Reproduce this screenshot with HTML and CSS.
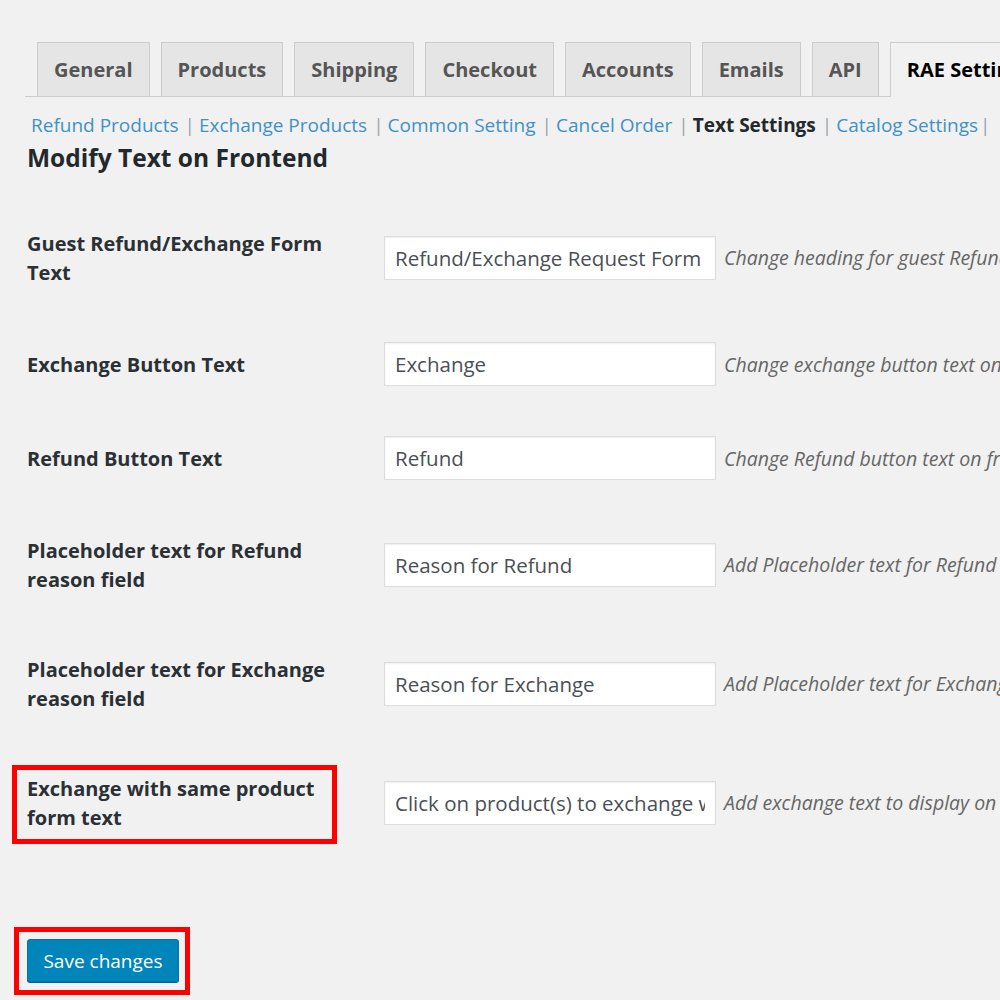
FILE: index.html
```html
<!DOCTYPE html>
<html>
<head>
<meta charset="utf-8">
<link rel="stylesheet" href="styles.css">
</head>
<body>
<div class="wrap">
  <nav class="tabs">
    <span class="tab">General</span>
    <span class="tab">Products</span>
    <span class="tab">Shipping</span>
    <span class="tab">Checkout</span>
    <span class="tab">Accounts</span>
    <span class="tab">Emails</span>
    <span class="tab">API</span>
    <span class="tab active">RAE Settings</span>
  </nav>
  <div class="sublinks">
    <a class="sub">Refund Products</a><span class="sep">|</span><a class="sub">Exchange Products</a><span class="sep">|</span><a class="sub">Common Setting</a><span class="sep">|</span><a class="sub">Cancel Order</a><span class="sep">|</span><b class="sub current">Text Settings</b><span class="sep">|</span><a class="sub">Catalog Settings</a><span class="sep tight">|</span>
  </div>
  <h2 class="heading">Modify Text on Frontend</h2>
  <div class="form">
    <div class="row">
      <div class="label">Guest Refund/Exchange Form Text</div>
      <div class="field"><input class="input" type="text" value="Refund/Exchange Request Form"><span class="desc">Change heading for guest Refund/Exchange form</span></div>
    </div>
    <div class="row">
      <div class="label">Exchange Button Text</div>
      <div class="field"><input class="input" type="text" value="Exchange"><span class="desc">Change exchange button text on frontend</span></div>
    </div>
    <div class="row">
      <div class="label">Refund Button Text</div>
      <div class="field"><input class="input" type="text" value="Refund"><span class="desc">Change Refund button text on frontend</span></div>
    </div>
    <div class="row">
      <div class="label">Placeholder text for Refund reason field</div>
      <div class="field"><input class="input" type="text" value="Reason for Refund"><span class="desc">Add Placeholder text for Refund reason field</span></div>
    </div>
    <div class="row">
      <div class="label">Placeholder text for Exchange reason field</div>
      <div class="field"><input class="input" type="text" value="Reason for Exchange"><span class="desc">Add Placeholder text for Exchange reason field</span></div>
    </div>
    <div class="row">
      <div class="label"><span class="marked marked-label">Exchange with same product form text</span></div>
      <div class="field"><input class="input" type="text" value="Click on product(s) to exchange with same product"><span class="desc">Add exchange text to display on exchange form</span></div>
    </div>
  </div>
  <div class="submit">
    <span class="marked marked-button"><button class="button">Save changes</button></span>
  </div>
</div>
</body>
</html>
```
FILE: styles.css
```css
html, body {
  margin: 0;
  padding: 0;
  overflow: hidden;
  background: #f1f1f1;
}
body {
  font-family: "Open Sans", "Noto Sans", sans-serif;
  color: #23282d;
  width: 1000px;
  height: 1000px;
}
.wrap {
  padding: 42px 0 0 27px;
  width: 1200px;
}
.tabs {
  display: flex;
  gap: 11px;
  margin-left: -2px;
  padding-left: 12px;
  border-bottom: 1px solid #cccccc;
  height: 55px;
  box-sizing: border-box;
}
.tab {
  display: block;
  height: 54px;
  line-height: 54px;
  padding: 0 16px;
  box-sizing: border-box;
  border: 1px solid #cccccc;
  border-bottom: none;
  background: #e5e5e5;
  color: #555555;
  font-size: 20px;
  font-weight: 700;
}
.tab.active {
  background: #f1f1f1;
  color: #000000;
  height: 55px;
  margin-bottom: -1px;
}
.sublinks {
  margin: 15px 0 0 4px;
  font-size: 19px;
  line-height: 26px;
  white-space: nowrap;
}
.sub {
  color: #3f91c7;
}
.sub.current {
  color: #23282d;
  font-weight: 700;
}
.sep {
  color: #9aa4ad;
  margin: 0 4px 0 6px;
}
.sep.tight {
  margin: 0 0 0 2px;
}
.heading {
  margin: 4px 0 0 0;
  font-size: 24.5px;
  line-height: 31px;
  font-weight: 700;
  color: #23282d;
}
.form {
  margin-top: 25px;
}
.row {
  display: flex;
  align-items: center;
}
.label {
  width: 357px;
  box-sizing: border-box;
  padding: 30.5px 18px 30.5px 0;
  font-size: 20px;
  font-weight: 700;
  line-height: 29px;
  color: #2b3035;
}
.field {
  display: flex;
  align-items: center;
  padding: 25px 0;
}
.input {
  width: 332px;
  height: 44px;
  box-sizing: border-box;
  border: 1px solid #dddddd;
  box-shadow: inset 0 1px 2px rgba(0,0,0,0.07);
  background: #ffffff;
  padding: 0 10px;
  margin: 0;
  font-family: "Open Sans", "Noto Sans", sans-serif;
  font-size: 20.5px;
  color: #4a4f55;
  outline: none;
}
.desc {
  margin-left: 8px;
  font-size: 19.5px;
  font-style: italic;
  color: #666666;
  white-space: nowrap;
}
.marked {
  position: relative;
  display: inline-block;
}
.marked::after {
  content: "";
  position: absolute;
  border: 5px solid #ff0000;
  box-sizing: border-box;
}
.marked-label::after {
  left: -15px;
  top: -9px;
  width: 325px;
  height: 79px;
}
.submit {
  margin-top: 77px;
}
.marked-button::after {
  left: -13px;
  top: -12px;
  right: -11px;
  bottom: -13px;
}
.button {
  display: block;
  width: 152px;
  height: 43px;
  background: #0085ba;
  border: 1px solid #0073aa;
  border-radius: 3px;
  box-shadow: 0 1px 0 #006799;
  color: #ffffff;
  font-family: "Open Sans", "Noto Sans", sans-serif;
  font-size: 19px;
  padding: 0;
}
```
